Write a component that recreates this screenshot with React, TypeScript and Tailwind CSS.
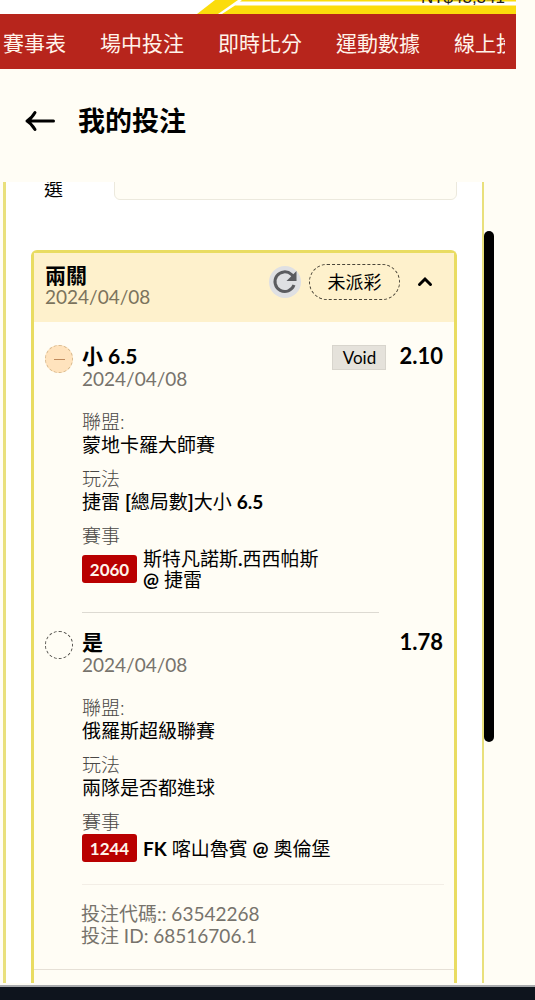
import type { ReactNode } from 'react';
import { twJoin } from 'tailwind-merge';

const navItems = ['賽事表', '場中投注', '即時比分', '運動數據', '線上投注'];

type Leg = {
  pick: ReactNode;
  date: string;
  odds: string;
  isVoid: boolean;
  league: string;
  market: ReactNode;
  code: string;
  match: ReactNode;
};

const legs: Leg[] = [
  {
    pick: '小 6.5',
    date: '2024/04/08',
    odds: '2.10',
    isVoid: true,
    league: '蒙地卡羅大師賽',
    market: (
      <>
        捷雷 <b>[</b>總局數<b>]</b>大小 <b>6.5</b>
      </>
    ),
    code: '2060',
    match: (
      <>
        斯特凡諾斯<b>.</b>西西帕斯
        <br />
        <b>@</b> 捷雷
      </>
    ),
  },
  {
    pick: '是',
    date: '2024/04/08',
    odds: '1.78',
    isVoid: false,
    league: '俄羅斯超級聯賽',
    market: '兩隊是否都進球',
    code: '1244',
    match: (
      <>
        <b>FK</b> 喀山魯賓 <b>@</b> 奧倫堡
      </>
    ),
  },
];

export default function App() {
  return (
    <div className="bg-[#fffdf5] font-['Lato','Noto_Sans_CJK_TC',sans-serif] text-black">
      <div className="mr-[19px]">
        <TopBar />
        <nav className="h-[55px] bg-[#b7251c] pt-[2px] pr-[11px] pl-[3px]">
          <ul className="flex h-full items-center gap-[34px] overflow-hidden">
            {navItems.map((item) => (
              <li key={item} className="shrink-0">
                <a href="#" className="text-[21px] leading-[30px] whitespace-nowrap text-[#fff3ea]">
                  {item}
                </a>
              </li>
            ))}
          </ul>
        </nav>
      </div>

      <header className="flex h-[113px] items-center gap-[22px] pb-[9px] pl-6">
        <button type="button" aria-label="返回">
          <svg width="32" height="22" viewBox="0 0 32 22" fill="none" stroke="#000" strokeWidth="3">
            <path
              d="M3 11H29.500M11 2.500C9 6 6.500 9 3 11C6.500 13 9 16 11 19.500"
              strokeLinecap="round"
              strokeLinejoin="round"
            />
          </svg>
        </button>
        <h1 className="text-[27px] leading-10 font-bold">我的投注</h1>
      </header>

      <div className="flex items-start pr-[41px] pl-[3px]">
        <main className="min-w-0 flex-1 border-r-2 border-l-3 border-[#e9e07c] bg-white px-[25px]">
          <div className="flex h-[18px] items-end overflow-hidden pl-[13px]">
            <label htmlFor="filter" className="w-[70px] shrink-0 text-[19px] leading-[23px]">
              選
            </label>
            <input
              id="filter"
              className="h-10 min-w-0 flex-1 rounded-md border border-[#ece9dd] bg-[#fffdf5]"
            />
          </div>
          <BetCard />
        </main>
        <div className="mt-[49px] h-[511px] w-[10px] shrink-0 rounded-full bg-black" />
      </div>

      <footer className="mt-[2px] h-[15px] border-t-2 border-[#a9abad] bg-[#0e141d]" />
    </div>
  );
}

function TopBar() {
  return (
    <div className="relative flex h-[14px] items-end justify-end overflow-hidden bg-white pr-[11px]">
      <svg
        className="absolute inset-0 h-full w-full"
        viewBox="0 0 516 14"
        preserveAspectRatio="xMinYMin slice"
        fill="#fbdc0c"
      >
        <path d="M197 14L215 0H238L218 14Z" />
        <path d="M222 14L235 5.500H516V14Z" />
        <path d="M240 1.500L242 0H516V1.500Z" />
      </svg>
      <span className="relative mb-[6px] font-['Liberation_Sans',sans-serif] text-[17px] leading-5 text-[#222]">
        NT$43,341
      </span>
    </div>
  );
}

function BetCard() {
  return (
    <section className="mt-[50px] rounded-t-md border-x-3 border-t-3 border-[#e9dc62] bg-[#fffdf5]">
      <div className="flex items-start bg-[#fef1cc] pt-[11px] pr-[15px] pb-[14px] pl-[11px]">
        <div className="flex-1">
          <h2 className="text-[21px] leading-[22px] font-bold">兩關</h2>
          <p className="text-[19px] leading-[22px] text-[#7b735c]">2024/04/08</p>
        </div>
        <div className="flex h-9 items-center">
          <button
            type="button"
            aria-label="重新整理"
            className="flex size-8 items-center justify-center rounded-full bg-[#dfe0e3]"
          >
            <svg width="32" height="32" viewBox="0 0 32 32" fill="none">
              <path d="M25 19A9.800 9.800 0 1 1 22.500 8.500L24 10" stroke="#5b5c60" strokeWidth="3" />
              <path d="M27.500 5V15H17.500Z" fill="#5b5c60" />
            </svg>
          </button>
          <span className="ml-2 flex h-9 w-[91px] items-center justify-center rounded-full border border-dashed border-[#4a4538] text-[18px]">
            未派彩
          </span>
          <button type="button" aria-label="收合" className="ml-[11px] p-1">
            <svg width="20" height="12" viewBox="0 0 20 12" fill="none" stroke="#000" strokeWidth="3">
              <path d="M4.500 8.500L10 3L15.500 8.500" strokeLinecap="round" />
            </svg>
          </button>
        </div>
      </div>

      <div className="pt-[22px]">
        {legs.map((leg, index) => (
          <BetLeg key={leg.code} leg={leg} isLast={index === legs.length - 1} />
        ))}
      </div>

      <div className="border-b border-[#e6e0d6] pt-[18px] pb-[22px] pl-[47px] text-[19px] leading-[22px] text-[#77736c]">
        <p>投注代碼:: 63542268</p>
        <p>投注 ID: 68516706.1</p>
      </div>
      <div className="h-[13px]" />
    </section>
  );
}

function BetLeg({ leg, isLast }: { leg: Leg; isLast: boolean }) {
  return (
    <article className="flex gap-[9px] pl-[11px]">
      <div
        className={twJoin(
          'mt-px flex size-7 shrink-0 items-center justify-center rounded-full border border-dashed',
          leg.isVoid ? 'border-[#d9b98c] bg-[#ffe3bd]' : 'border-[#55534e]',
        )}
      >
        {leg.isVoid && <span className="h-px w-[11px] bg-[#c08a5c]" />}
      </div>

      <div className="min-w-0 flex-1">
        <div className="flex h-6 items-start pr-[11px]">
          <h3 className="flex-1 text-[21px] leading-6 font-bold">{leg.pick}</h3>
          {leg.isVoid && (
            <span className="mt-px mr-[13px] flex h-[25px] w-[54px] items-center justify-center border border-[#d8d5cd] bg-[#e5e2db] text-[17px]">
              Void
            </span>
          )}
          <span className="text-[22px] leading-6 font-bold">{leg.odds}</span>
        </div>
        <p className="text-[19px] leading-[22px] text-[#77736c]">{leg.date}</p>

        <dl className="mt-5 text-[19px] leading-[23px]">
          <dt className="font-light text-[#4a4845]">聯盟:</dt>
          <dd>{leg.league}</dd>
          <dt className="mt-[11px] font-light text-[#4a4845]">玩法</dt>
          <dd>{leg.market}</dd>
          <dt className="mt-[11px] font-light text-[#4a4845]">賽事</dt>
          <dd className="mt-px flex items-center gap-[6px] leading-[21px]">
            <span className="flex h-7 w-[55px] items-center justify-center rounded-[3px] bg-[#b90000] text-[17px] font-bold text-[#fff3ea]">
              {leg.code}
            </span>
            <span>{leg.match}</span>
          </dd>
        </dl>
        <div
          className={twJoin(
            'mt-[22px] h-px',
            isLast ? 'mr-[10px] bg-[#f3eee6]' : 'mr-[75px] mb-[17px] bg-[#dddad2]',
          )}
        />
      </div>
    </article>
  );
}
